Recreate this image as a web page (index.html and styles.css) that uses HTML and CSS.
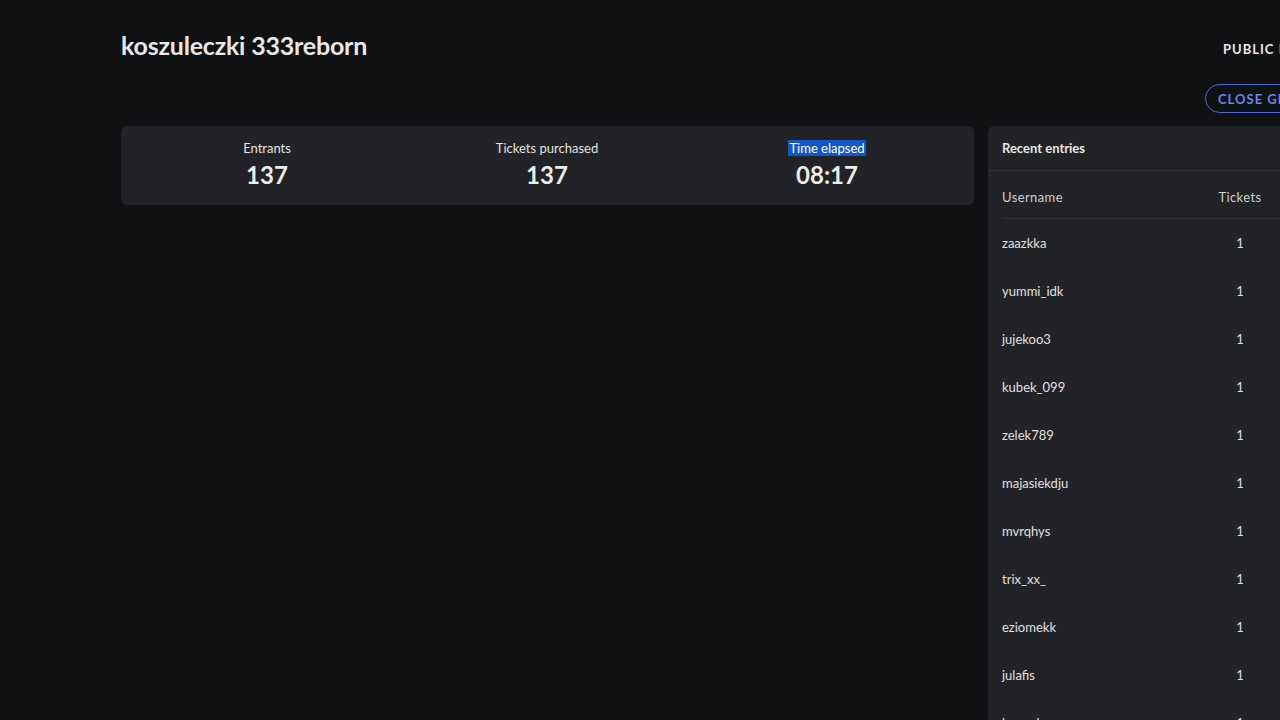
FILE: index.html
```html
<!DOCTYPE html>
<html>
<head>
<meta charset="utf-8">
<link rel="stylesheet" href="styles.css">
</head>
<body>
<div class="page">
  <header class="top">
    <h1 class="title">koszuleczki 333reborn</h1>
    <div class="actions">
      <div class="public">PUBLIC PAGE</div>
      <button class="close-btn">CLOSE GIVEAWAY</button>
    </div>
  </header>
  <div class="main">
    <section class="stats">
      <div class="stat"><div class="label">Entrants</div><div class="value">137</div></div>
      <div class="stat"><div class="label">Tickets purchased</div><div class="value">137</div></div>
      <div class="stat"><div class="label"><span class="sel">Time elapsed</span></div><div class="value">08:17</div></div>
    </section>
    <aside class="entries">
      <div class="entries-head">Recent entries</div>
      <div class="table">
        <div class="row th"><span class="user">Username</span><span class="tix">Tickets</span><span class="extra"></span></div>
        <div class="row"><span class="user">zaazkka</span><span class="tix">1</span><span class="extra"></span></div>
        <div class="row"><span class="user">yummi_idk</span><span class="tix">1</span><span class="extra"></span></div>
        <div class="row"><span class="user">jujekoo3</span><span class="tix">1</span><span class="extra"></span></div>
        <div class="row"><span class="user">kubek_099</span><span class="tix">1</span><span class="extra"></span></div>
        <div class="row"><span class="user">zelek789</span><span class="tix">1</span><span class="extra"></span></div>
        <div class="row"><span class="user">majasiekdju</span><span class="tix">1</span><span class="extra"></span></div>
        <div class="row"><span class="user">mvrqhys</span><span class="tix">1</span><span class="extra"></span></div>
        <div class="row"><span class="user">trix_xx_</span><span class="tix">1</span><span class="extra"></span></div>
        <div class="row"><span class="user">eziomekk</span><span class="tix">1</span><span class="extra"></span></div>
        <div class="row"><span class="user">julafis</span><span class="tix">1</span><span class="extra"></span></div>
        <div class="row"><span class="user">lomuchy</span><span class="tix">1</span><span class="extra"></span></div>
      </div>
    </aside>
  </div>
</div>
</body>
</html>
```
FILE: styles.css
```css
html, body {
  margin: 0;
  padding: 0;
  background: #0f1112;
  overflow: hidden;
  height: 720px;
}
body {
  font-family: "Lato", "Open Sans", sans-serif;
  color: #e6e6e6;
}
.page {
  width: 1400px;
  padding: 0 0 0 121px;
}
.top {
  display: grid;
  grid-template-columns: 1084px 225px;
  align-items: start;
  height: 126px;
}
.title {
  margin: 30px 0 0 0;
  font-size: 25px;
  font-weight: 700;
  color: #e8e8e8;
  letter-spacing: -0.2px;
}
.actions {
  display: flex;
  flex-direction: column;
  align-items: flex-start;
}
.public {
  margin-top: 41px;
  margin-left: 18px;
  font-size: 13px;
  line-height: 16px;
  font-weight: 700;
  letter-spacing: 1px;
  color: #e8e8e8;
}
.close-btn {
  margin-top: 27px;
  height: 29px;
  padding: 0 12px;
  border: 1.5px solid #4a6ad8;
  border-radius: 15px;
  background: transparent;
  color: #6386f2;
  font-family: inherit;
  font-size: 13px;
  font-weight: 700;
  letter-spacing: 1px;
  white-space: nowrap;
}
.main {
  display: flex;
  gap: 14px;
  align-items: flex-start;
}
.stats {
  width: 853px;
  height: 79px;
  background: #222326;
  border-radius: 6px;
  display: grid;
  grid-template-columns: repeat(3, 280px);
  box-sizing: border-box;
  padding: 0 7px 0 6px;
}
.stat {
  display: flex;
  flex-direction: column;
  align-items: center;
  padding-top: 14px;
}
.label {
  font-size: 13px;
  color: #e2e2e2;
  line-height: 16px;
}
.sel {
  background: #1656c7;
  color: #fff;
  padding: 0 1px;
}
.value {
  margin-top: 4px;
  font-size: 24px;
  font-weight: 700;
  color: #ececec;
  line-height: 30px;
}
.entries {
  width: 380px;
  background: #222326;
  border-radius: 6px 6px 0 0;
  min-height: 620px;
}
.entries-head {
  height: 44px;
  line-height: 44px;
  padding-left: 14px;
  font-size: 13px;
  font-weight: 700;
  color: #e6e6e6;
  border-bottom: 1px solid #323338;
}
.table {
  padding: 0 14px;
}
.row {
  display: flex;
  align-items: center;
  height: 48px;
  font-size: 13px;
  color: #e0e0e0;
}
.row.th {
  height: 43px;
  padding-top: 4px;
  border-bottom: 1px solid #323338;
  color: #cfcfcf;
  letter-spacing: 0.4px;
}
.user {
  flex: 0 0 190px;
}
.tix {
  flex: 0 0 96px;
  text-align: center;
}
.extra {
  flex: 1;
}
```
